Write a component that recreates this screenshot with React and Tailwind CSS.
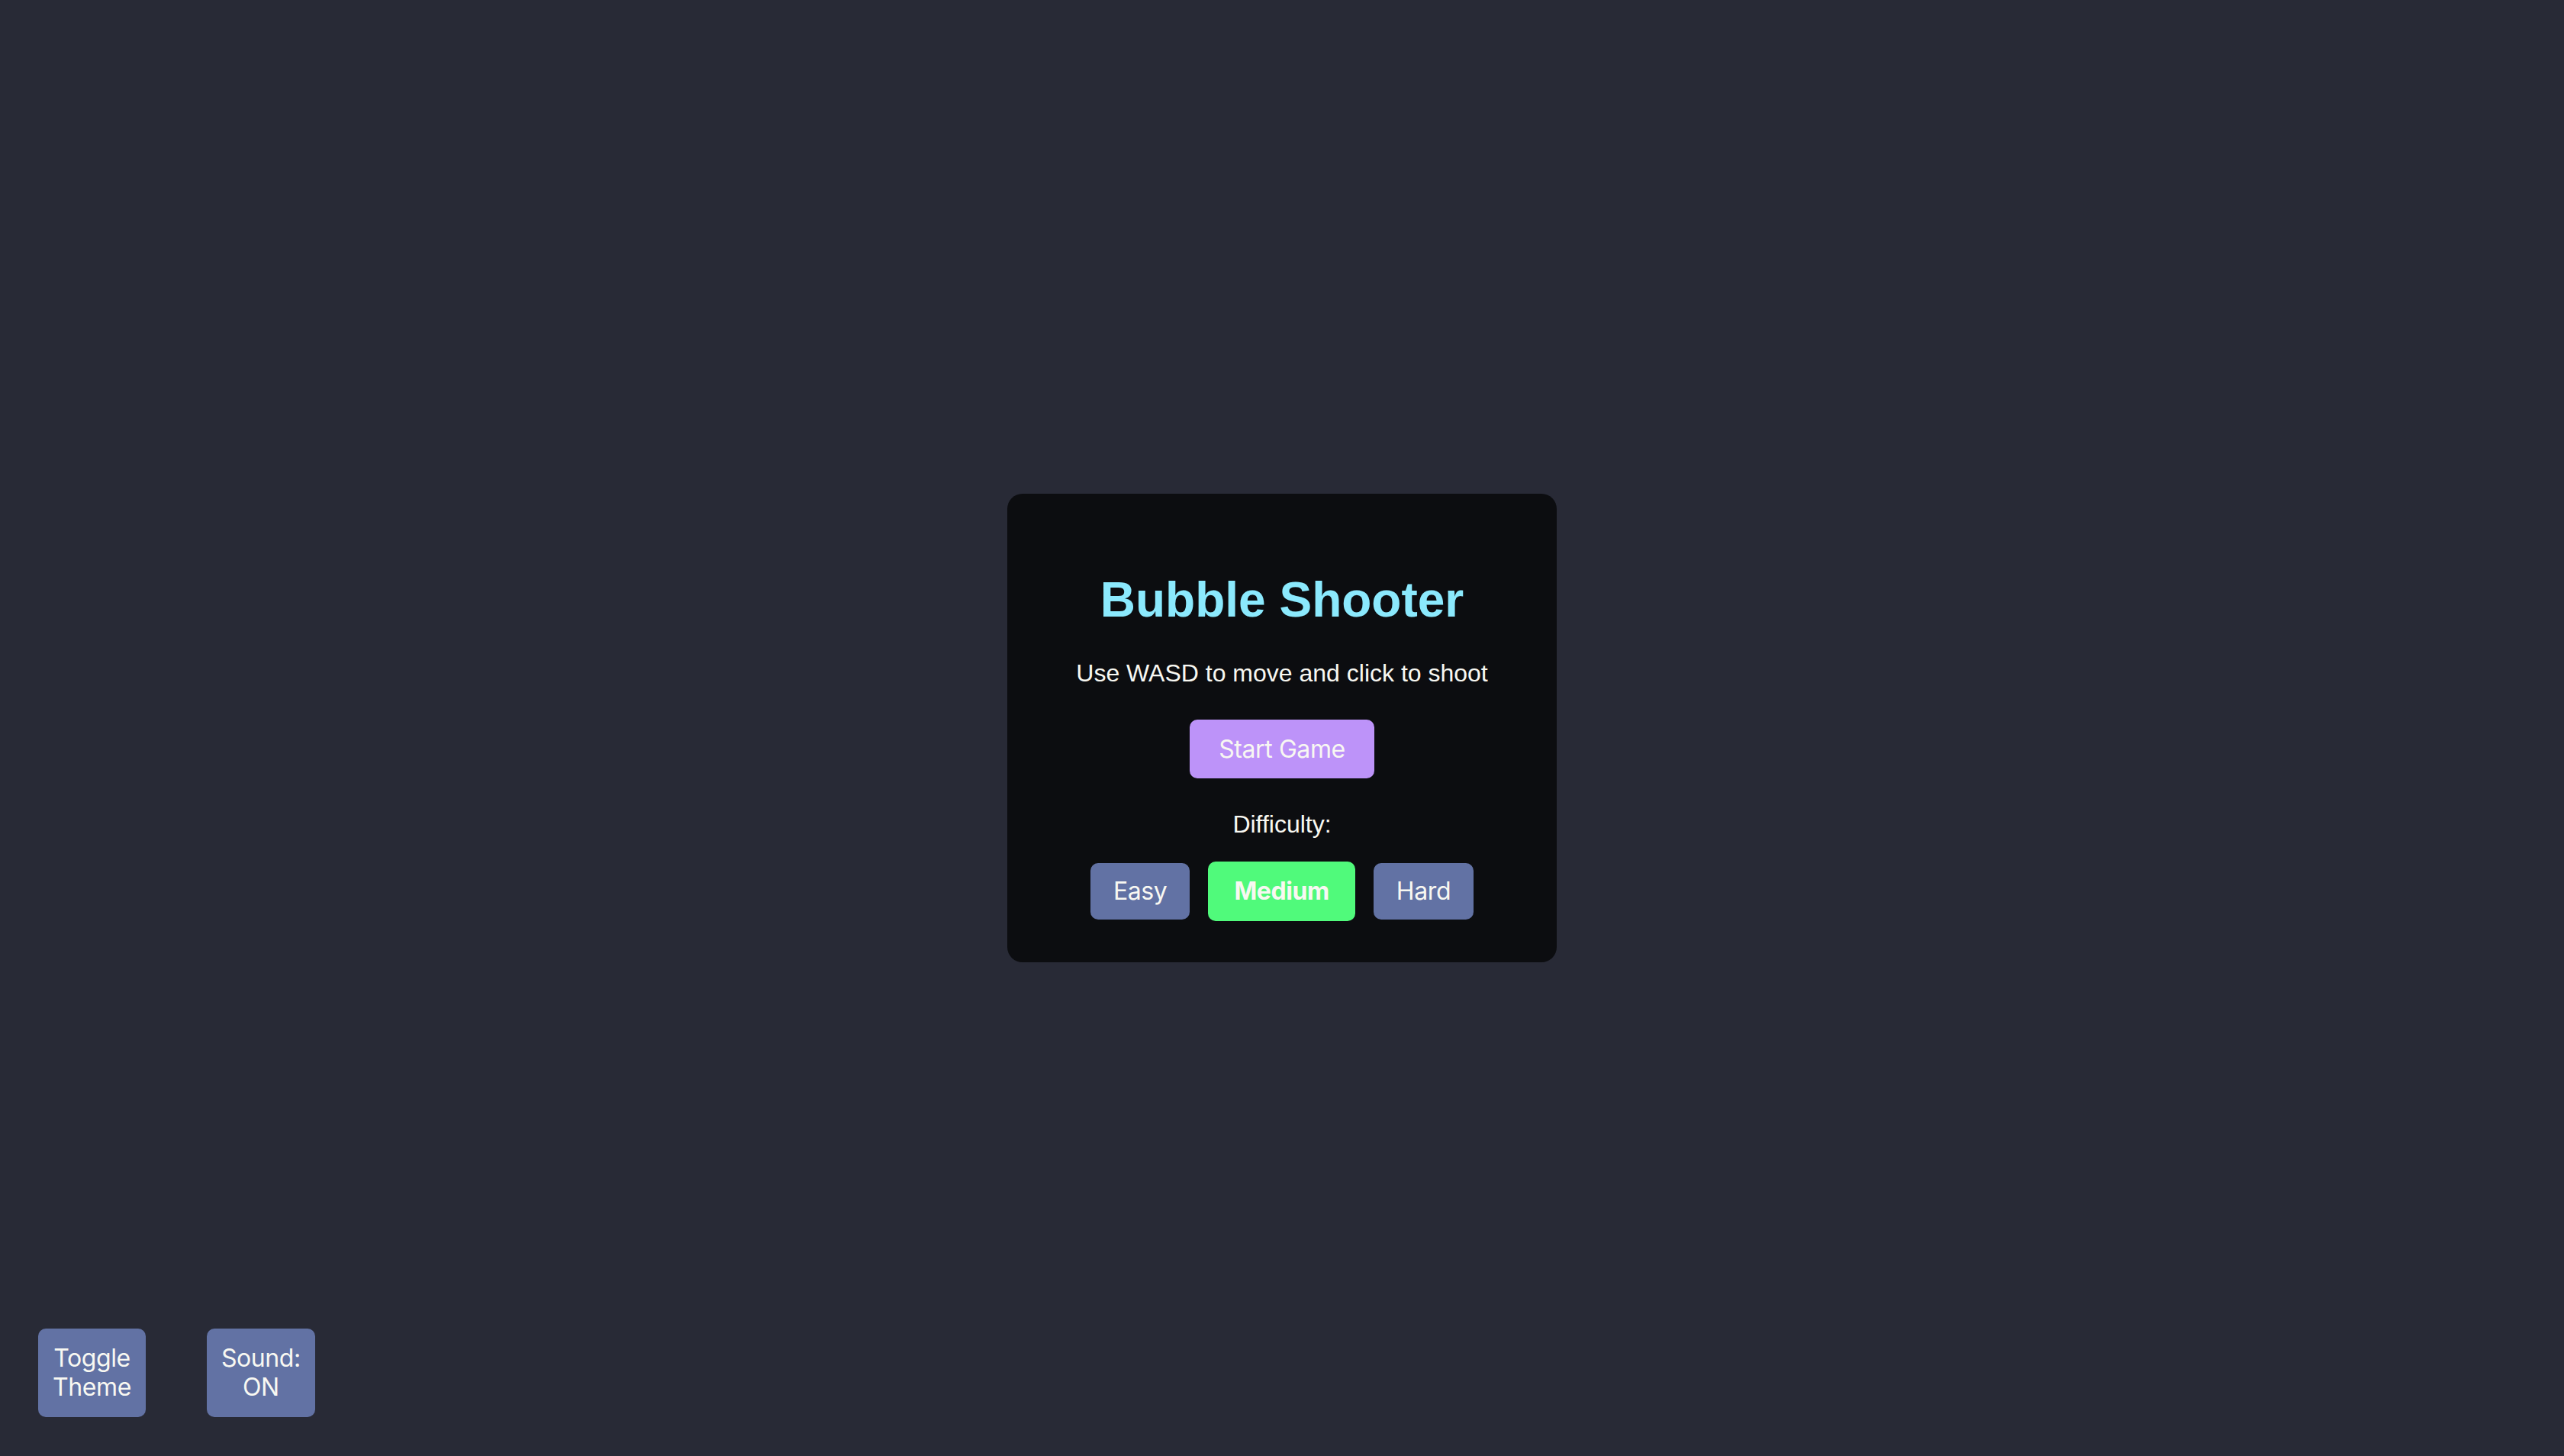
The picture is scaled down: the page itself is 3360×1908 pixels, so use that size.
import { useState } from 'react';

const DIFFICULTIES = ['Easy', 'Medium', 'Hard'];

const DifficultyButton = ({ label, active, onClick }) => {
  if (active) {
    return (
      <button
        onClick={onClick}
        className="rounded-[10px] border-2 border-[#50fa7b] bg-[#50fa7b] px-[32px] py-[17px] font-['Inter',sans-serif] text-[32px] font-bold leading-[40px] tracking-[-0.4px] text-[#f8f8f2]"
      >
        {label}
      </button>
    );
  }
  return (
    <button
      onClick={onClick}
      className="rounded-[10px] bg-[#6272a4] px-[30px] py-[17px] font-['Inter',sans-serif] text-[32px] leading-[40px] tracking-[-0.4px] text-[#f8f8f2]"
    >
      {label}
    </button>
  );
};

const StartMenu = ({ difficulty, setDifficulty }) => {
  return (
    <div className="flex w-[720px] flex-col items-center rounded-[20px] bg-[#0c0d10] pt-[102px] pb-[54px]">
      <h1 className="font-['Liberation_Sans',Arial,sans-serif] text-[64px] font-bold leading-[74px] text-[#8be9fd]">
        Bubble Shooter
      </h1>
      <p className="mt-[41px] font-['Liberation_Sans',Arial,sans-serif] text-[32px] leading-[37px] text-[#f8f8f2]">
        Use WASD to move and click to shoot
      </p>
      <button className="mt-[42px] rounded-[10px] bg-[#bd93f9] px-[38px] py-[19px] font-['Inter',sans-serif] text-[32px] leading-[39px] tracking-[-0.4px] text-[#f8f8f2]">
        Start Game
      </button>
      <p className="mt-[42px] font-['Liberation_Sans',Arial,sans-serif] text-[32px] leading-[37px] text-[#f8f8f2]">
        Difficulty:
      </p>
      <div className="mt-[30px] flex items-center gap-[24px]">
        {DIFFICULTIES.map((d) => (
          <DifficultyButton
            key={d}
            label={d}
            active={difficulty === d}
            onClick={() => setDifficulty(d)}
          />
        ))}
      </div>
    </div>
  );
};

const App = () => {
  const [difficulty, setDifficulty] = useState('Medium');
  const [sound, setSound] = useState(true);

  return (
    <div className="relative flex min-h-screen items-center justify-center bg-[#282a36]">
      <StartMenu difficulty={difficulty} setDifficulty={setDifficulty} />

      {/* fixed controls, bottom left */}
      <div className="fixed bottom-[51px] left-[50px] flex gap-[80px]">
        <button className="w-min rounded-[10px] bg-[#6272a4] px-[19px] py-[20px] font-['Inter',sans-serif] text-[32px] leading-[38px] tracking-[-0.4px] text-[#f8f8f2]">
          Toggle Theme
        </button>
        <button
          onClick={() => setSound(!sound)}
          className="w-min rounded-[10px] bg-[#6272a4] px-[19px] py-[20px] font-['Inter',sans-serif] text-[32px] leading-[38px] tracking-[-0.4px] text-[#f8f8f2]"
        >
          Sound: {sound ? 'ON' : 'OFF'}
        </button>
      </div>
    </div>
  );
};

export default App;
